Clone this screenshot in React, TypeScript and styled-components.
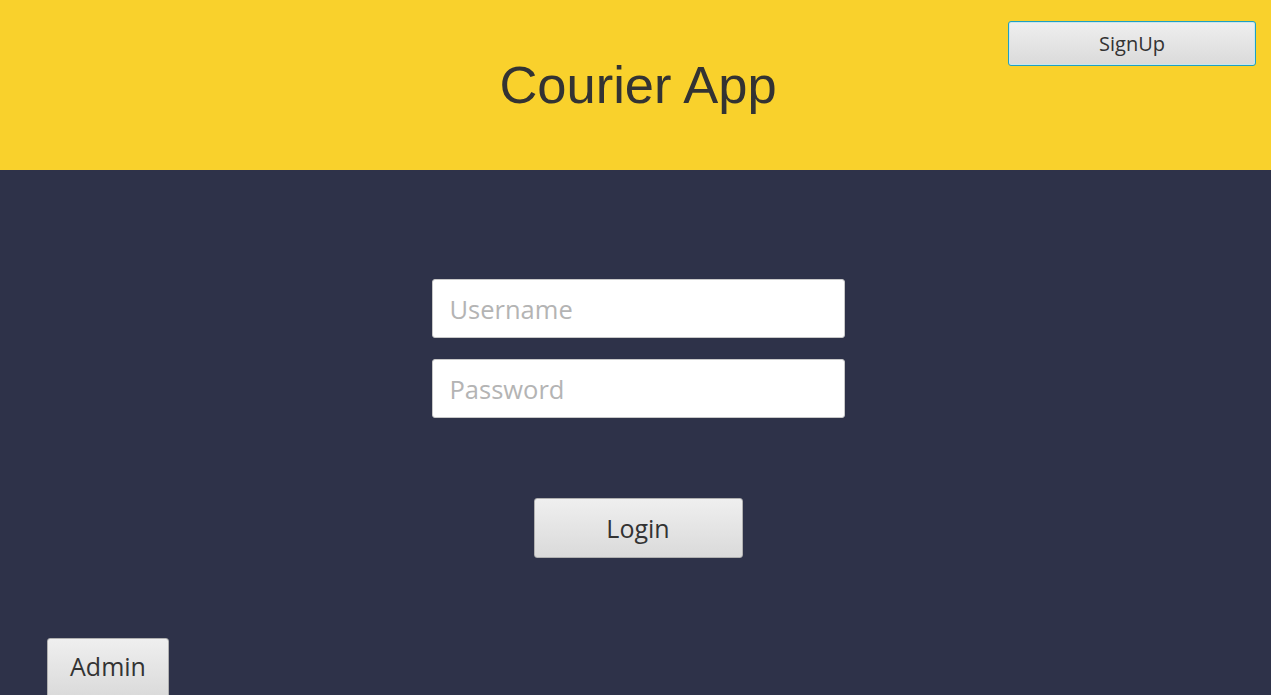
import React from "react";
import styled, { createGlobalStyle } from "styled-components";

const Global = createGlobalStyle`
  html, body { margin: 0; padding: 0; background: #2e3249; overflow: hidden; }
  body { font-family: "Open Sans", "Noto Sans", sans-serif; }
  * { box-sizing: border-box; }
`;

const Page = styled.div`
  width: 1271px;
  height: 695px;
  display: flex;
  flex-direction: column;
  background: #2e3249;
  overflow: hidden;
`;

const Header = styled.header`
  flex-shrink: 0;
  height: 170px;
  background: #f9d12c;
  display: flex;
  justify-content: center;
  position: relative;
`;

const Title = styled.h1`
  margin: 54px 0 0 5px;
  font-family: "Liberation Sans", Arial, sans-serif;
  font-weight: 400;
  font-size: 52.5px;
  line-height: 62px;
  color: #333333;
  height: 62px;
`;

const Button = styled.button<{ $w: number; $h: number; $size: number; $focus?: boolean; $padBottom?: number }>`
  flex-shrink: 0;
  width: ${(p) => p.$w}px;
  height: ${(p) => p.$h}px;
  font-family: "Open Sans", "Noto Sans", sans-serif;
  font-size: ${(p) => p.$size}px;
  color: #333333;
  background: linear-gradient(#efefef, #dadada);
  border: 1px solid ${(p) => (p.$focus ? "#1fa0c2" : "#b0b0b0")};
  box-shadow: ${(p) => (p.$focus ? "inset 0 0 0 1px #c9e6ee" : "none")};
  border-radius: 3px;
  padding: 0 0 ${(p) => p.$padBottom ?? 0}px;
  cursor: pointer;
`;

const SignUpSlot = styled.div`
  position: absolute;
  top: 21px;
  right: 15px;
`;

const Body = styled.main`
  flex: 1;
  min-height: 0;
  display: flex;
  flex-direction: column;
  align-items: center;
  padding-top: 109px;
`;

const Form = styled.div`
  display: flex;
  flex-direction: column;
  gap: 21px;
  margin-left: 5px;
  flex-shrink: 0;
`;

const Input = styled.input`
  width: 413px;
  height: 59px;
  border: 1px solid #c8c8c8;
  border-radius: 3px;
  background: #ffffff;
  padding: 0 17px;
  font-family: "Open Sans", "Noto Sans", sans-serif;
  font-size: 25.5px;
  color: #333;
  outline: none;
  &::placeholder { color: #b4b4b4; }
`;

const LoginRow = styled.div`
  flex-shrink: 0;
  margin-top: 80px;
  margin-left: 5px;
`;

const AdminRow = styled.div`
  flex-shrink: 0;
  align-self: stretch;
  margin-top: 80px;
  padding-left: 47px;
`;

export default function App() {
  return (
    <>
      <Global />
      <Page>
        <Header>
          <Title>Courier App</Title>
          <SignUpSlot>
            <Button $w={248} $h={45} $size={20} $focus>SignUp</Button>
          </SignUpSlot>
        </Header>
        <Body>
          <Form>
            <Input placeholder="Username" />
            <Input placeholder="Password" type="password" />
          </Form>
          <LoginRow>
            <Button $w={209} $h={60} $size={25}>Login</Button>
          </LoginRow>
          <AdminRow>
            <Button $w={122} $h={60} $size={25} $padBottom={4}>Admin</Button>
          </AdminRow>
        </Body>
      </Page>
    </>
  );
}
